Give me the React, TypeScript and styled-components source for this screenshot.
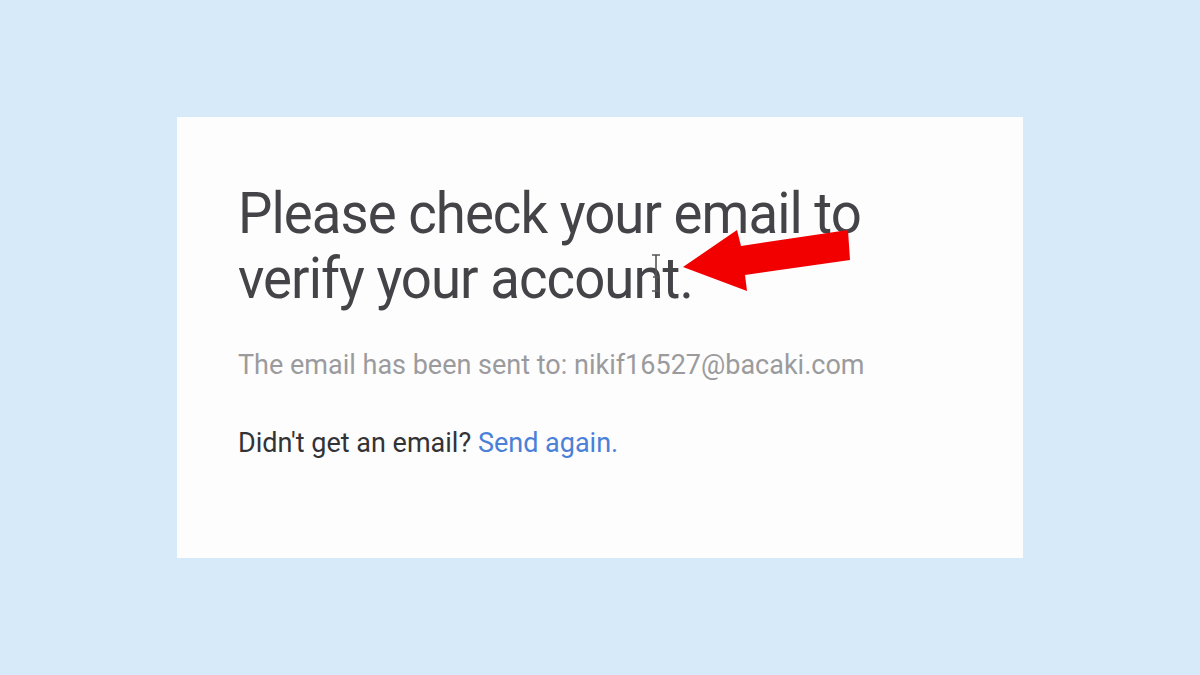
import styled, { createGlobalStyle } from "styled-components";

const GlobalStyle = createGlobalStyle`
  html, body {
    margin: 0;
    padding: 0;
  }
  body {
    background: #d7eaf9;
    font-family: Roboto, "Liberation Sans", sans-serif;
  }
`;

const Page = styled.div`
  width: 1200px;
  height: 675px;
  display: flex;
  align-items: center;
  justify-content: center;
`;

const Card = styled.div`
  position: relative;
  width: 846px;
  height: 441px;
  box-sizing: border-box;
  background: #fdfdfe;
  padding: 64px 60px 0 61px;
`;

const Heading = styled.h1`
  margin: 0;
  font-size: 58px;
  font-weight: 400;
  line-height: 65px;
  color: #444448;
  letter-spacing: -1px;
  transform: scaleX(0.94);
  transform-origin: left center;
  white-space: nowrap;
`;

const SentTo = styled.p`
  margin: 38px 0 0;
  font-size: 27px;
  color: #9b9b9d;
`;

const Again = styled.p`
  margin: 46px 0 0;
  font-size: 27px;
  color: #333336;
`;

const Link = styled.a`
  color: #4b80d8;
  text-decoration: none;
`;

const Arrow = styled.svg`
  position: absolute;
  left: 500px;
  top: 108px;
`;

const Cursor = styled.svg`
  position: absolute;
  left: 473px;
  top: 136px;
`;

export default function App() {
  return (
    <>
      <GlobalStyle />
      <Page>
        <Card>
          <Heading>
            Please check your email to
            <br />
            verify your account.
          </Heading>
          <SentTo>The email has been sent to: nikif16527@bacaki.com</SentTo>
          <Again>
            Didn't get an email? <Link href="#">Send again.</Link>
          </Again>
          <Cursor width="12" height="40" viewBox="0 0 12 40">
            <path d="M2 2h8M6 2v36M2 38h8M3 24h6" stroke="#555" strokeWidth="1.6" fill="none" />
          </Cursor>
          <Arrow width="180" height="70" viewBox="0 0 180 70">
            <polygon points="6,42 60,5 64,21 171,5 173,35 68,50 70,66" fill="#f20000" />
          </Arrow>
        </Card>
      </Page>
    </>
  );
}
